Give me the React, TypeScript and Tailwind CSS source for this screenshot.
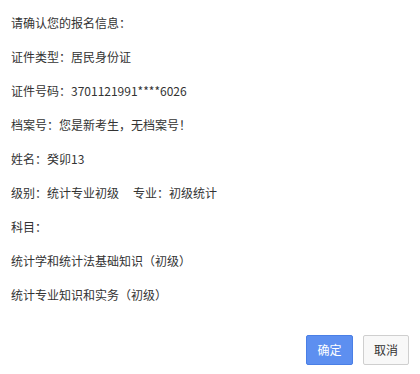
const lines = [
  "请确认您的报名信息：",
  "证件类型：居民身份证",
  "证件号码：3701121991****6026",
  "档案号：您是新考生，无档案号！",
  "姓名：癸卯13",
]

const subjects = ["统计学和统计法基础知识（初级）", "统计专业知识和实务（初级）"]

const App = () => {
  return (
    <div
      className="w-[420px] h-[374px] bg-white flex flex-col text-[12px] text-[#333]"
      style={{ fontFamily: '"Microsoft YaHei", "Noto Sans CJK SC", sans-serif' }}
    >
      <div className="pl-[11px] pt-[6px] flex flex-col">
        {lines.map((l) => (
          <div key={l} className="h-[34px] leading-[34px]">{l}</div>
        ))}
        <div className="h-[34px] leading-[34px]">
          级别：统计专业初级<span className="ml-[14px]">专业：初级统计</span>
        </div>
        <div className="h-[34px] leading-[34px]">科目：</div>
        {subjects.map((s) => (
          <div key={s} className="h-[34px] leading-[34px]">{s}</div>
        ))}
      </div>
      <div className="mt-auto mb-[9px] mr-[11px] flex justify-end gap-[10px]">
        <button className="w-[47px] h-[30px] rounded-[2px] bg-[#5d8ff0] border border-[#4a7fe6] text-white text-[12px]">
          确定
        </button>
        <button className="w-[46px] h-[30px] rounded-[2px] bg-[#f8f8f8] border border-[#cfcfcf] text-[#333] text-[12px]">
          取消
        </button>
      </div>
    </div>
  )
}

export default App
